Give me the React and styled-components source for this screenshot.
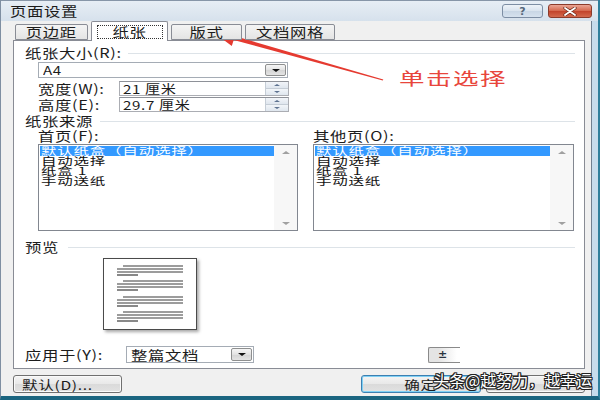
import React from 'react'
import styled, { createGlobalStyle, css } from 'styled-components'

const GlobalStyle = createGlobalStyle`
  html, body {
    margin: 0;
    padding: 0;
    background: #fff;
  }
  body {
    font-family: 'Noto Sans CJK SC', 'Noto Sans', sans-serif;
    color: #1c1c1c;
  }
`

const cjk = css`
  font-size: 13px;
  letter-spacing: 0.5px;
  line-height: 14px;
  white-space: nowrap;
`

// the dialog in the picture is stretched sideways, so the glyphs are too
const Wide = styled.span`
  display: inline-block;
  transform: scaleX(${p => p.$x || 1.26});
  transform-origin: ${p => (p.$center ? 'center' : 'left')} center;
`

const Window = styled.div`
  position: relative;
  width: 600px;
  height: 400px;
  box-sizing: border-box;
  display: flex;
  flex-direction: column;
  background: #c6dcec;
  border-left: 1px solid #7f8fa2;
  border-right: 2px solid #2f7f9c;
  border-bottom: 4px solid #1b6580;
  overflow: hidden;
`

const TitleBar = styled.div`
  height: 21px;
  flex: none;
  box-sizing: border-box;
  display: flex;
  align-items: center;
  justify-content: space-between;
  padding: 0 6px 0 9px;
  background: linear-gradient(#e7eef5, #d6e1ec);
  border-top: 1px solid #8796a8;
`

const Title = styled.div`
  ${cjk}
  color: #1a1a1a;
`

const Controls = styled.div`
  display: flex;
  gap: 5px;
  align-self: flex-start;
  margin-top: 3px;
`

const CaptionButton = styled.div`
  width: ${p => p.$w}px;
  height: 14px;
  box-sizing: border-box;
  border: 1px solid ${p => (p.$close ? '#8b3b2b' : '#7d8ea4')};
  border-radius: 3px;
  background: ${p =>
    p.$close
      ? 'linear-gradient(#eaa595, #d4664c 50%, #c2432b 51%, #d36a4e)'
      : 'linear-gradient(#eef3f8, #d9e3ee 50%, #c8d6e5 51%, #d6e2ee)'};
  display: flex;
  align-items: center;
  justify-content: center;
  font: bold 11px 'DejaVu Sans', sans-serif;
  color: #56677a;
`

const Body = styled.div`
  flex: 1;
  display: flex;
  flex-direction: column;
  margin-right: 6px;
  padding: 0 6px 0 12px;
  background: #f0f0f0;
  border-right: 1px solid #6f7f90;
`

const TabRow = styled.div`
  height: 19px;
  flex: none;
  display: flex;
  align-items: flex-end;
  gap: 3px;
  padding-left: 2px;
  position: relative;
  z-index: 1;
`

const Tab = styled.div`
  ${cjk}
  width: ${p => p.$w}px;
  height: ${p => (p.$active ? 20 : 16)}px;
  margin-bottom: ${p => (p.$active ? -1 : 0)}px;
  box-sizing: border-box;
  border: 1px solid #898c95;
  border-bottom: ${p => (p.$active ? 'none' : '1px solid #898c95')};
  border-radius: 2px 2px 0 0;
  background: ${p => (p.$active ? '#fff' : 'linear-gradient(#f4f4f4, #e4e4e4)')};
  display: flex;
  align-items: center;
  justify-content: center;
`

const FocusRect = styled.span`
  border: 1px dotted #333;
  width: 64px;
  height: 12px;
  display: flex;
  align-items: center;
  justify-content: center;
`

const Panel = styled.div`
  height: 329px;
  flex: none;
  box-sizing: border-box;
  background: #fff;
  border: 1px solid #898c95;
  padding: 5px 9px 0 11px;
  display: flex;
  flex-direction: column;
`

const SectionHead = styled.div`
  ${cjk}
  height: 14px;
  display: flex;
  align-items: center;
  margin-top: ${p => p.$mt || 0}px;

  &::after {
    content: '';
    flex: 1;
    height: 1px;
    background: #dde3e8;
  }
`

const HeadLabel = styled.div`
  width: ${p => p.$w}px;
`

const Combo = styled.div`
  width: ${p => p.$w}px;
  height: ${p => p.$h}px;
  margin-top: ${p => p.$mt || 0}px;
  margin-left: ${p => p.$ml || 0}px;
  box-sizing: border-box;
  border: 1px solid #a5acb5;
  background: #fff;
  display: flex;
  align-items: center;
  padding: 0 1px 0 4px;
  ${cjk}
  font-size: ${p => p.$fs || 13}px;
`

const DropButton = styled.div`
  margin-left: auto;
  width: 21px;
  height: ${p => p.$h}px;
  box-sizing: border-box;
  border: 1px solid #8e8f8f;
  border-radius: 2px;
  background: linear-gradient(#f6f6f6, #e2e2e2 50%, #d4d4d4 51%, #e4e4e4);
  display: flex;
  align-items: center;
  justify-content: center;
`

const Caret = styled.span`
  width: 0;
  height: 0;
  border-left: ${p => p.$s || 4}px solid transparent;
  border-right: ${p => p.$s || 4}px solid transparent;
  ${p =>
    p.$up
      ? css`border-bottom: ${(p.$s || 4) - 1}px solid ${p.$c || '#111'};`
      : css`border-top: ${(p.$s || 4) - 1}px solid ${p.$c || '#111'};`}
`

const Indent = styled.div`
  margin-left: 13px;
`

const FieldRow = styled.div`
  display: flex;
  align-items: center;
  margin-top: ${p => p.$mt}px;
`

const FieldLabel = styled.div`
  ${cjk}
  width: ${p => p.$w}px;
`

const Input = styled.div`
  width: 170px;
  height: 15px;
  box-sizing: border-box;
  border: 1px solid #abadb3;
  border-top-color: #8e9198;
  display: flex;
  align-items: center;
  padding-left: 3px;
  ${cjk}
  font-size: 12px;
`

const Spinner = styled.div`
  margin-left: auto;
  width: 22px;
  height: 13px;
  display: flex;
  flex-direction: column;
  border-left: 1px solid #c5cdd6;
`

const SpinHalf = styled.div`
  flex: 1;
  display: flex;
  align-items: center;
  justify-content: center;
  background: linear-gradient(#f2f5f9, #dfe6ee);
  border-bottom: ${p => (p.$top ? '1px solid #c5cdd6' : 'none')};
`

const SourceGrid = styled.div`
  margin-left: 13px;
  margin-top: 1px;
  display: grid;
  grid-template-columns: 260px 261px;
  column-gap: 15px;
  row-gap: 1px;
`

const SubLabel = styled.div`
  ${cjk}
  height: 14px;
`

const ListBox = styled.div`
  height: 87px;
  box-sizing: border-box;
  border: 1px solid #828790;
  background: #fff;
  display: flex;
`

const Items = styled.div`
  flex: 1;
  padding: 1px 0 0 1px;
`

const Item = styled.div`
  font-size: 10px;
  letter-spacing: 0.5px;
  line-height: 10px;
  height: 10px;
  white-space: nowrap;
  padding-left: 1px;
  color: ${p => (p.$selected ? '#fff' : '#111')};
  background: ${p => (p.$selected ? '#3399ff' : 'transparent')};
`

const ScrollBar = styled.div`
  width: 23px;
  display: flex;
  flex-direction: column;
  justify-content: space-between;
  align-items: center;
  padding: 6px 0 5px;
  background: #f7f7f7;
`

const PreviewPage = styled.div`
  margin: 4px 0 0 78px;
  width: 94px;
  height: 72px;
  box-sizing: border-box;
  border: 1px solid #4a4a4a;
  background: #fff;
  box-shadow: 2px 2px 3px rgba(0, 0, 0, 0.35);
`

const ApplyRow = styled.div`
  display: flex;
  align-items: center;
  height: 17px;
  margin-top: 16px;
`

const GhostButton = styled.div`
  margin-left: 174px;
  width: 32px;
  height: 16px;
  box-sizing: border-box;
  border: 1px solid #8a8a8a;
  border-right: none;
  border-radius: 2px 0 0 2px;
  background: linear-gradient(90deg, #e4e4e4 30%, #fff 90%);
  font: bold 11px 'DejaVu Sans', sans-serif;
  color: #2a3440;
  display: flex;
  align-items: center;
  padding-left: 9px;
`

const ButtonRow = styled.div`
  display: flex;
  gap: 5px;
  height: 18px;
  margin-top: 6px;
`

const Button = styled.div`
  width: ${p => p.$w}px;
  height: 18px;
  box-sizing: border-box;
  border: 1px solid ${p => (p.$default ? '#3c7fb1' : '#707070')};
  border-radius: 3px;
  background: linear-gradient(#f4f4f4, #e8e8e8 50%, #dadada 51%, #e2e2e2);
  box-shadow: ${p => (p.$default ? 'inset 0 0 0 1px #7fd0f4' : 'inset 0 0 0 1px #fafafa')};
  display: flex;
  align-items: center;
  justify-content: ${p => p.$align || 'center'};
  padding-left: ${p => p.$pl || 0}px;
  font-size: 12px;
  letter-spacing: 0.5px;
  white-space: nowrap;
`

const Spacer = styled.div`
  flex: 1;
`

const Note = styled.div`
  position: absolute;
  left: 398px;
  top: 67px;
  font-size: 17px;
  letter-spacing: 1px;
  line-height: 22px;
  color: #e8463c;
  white-space: nowrap;
`

const Arrow = styled.svg`
  position: absolute;
  left: 0;
  top: 0;
  pointer-events: none;
`

const Watermark = styled.div`
  position: absolute;
  left: 432px;
  top: 370px;
  font-size: 16px;
  line-height: 20px;
  color: #fff;
  white-space: nowrap;
  text-shadow: 1px 0 0 #222, -1px 0 0 #222, 0 1px 0 #222, 0 -1px 0 #222, 1px 1px 0 #222,
    -1px -1px 0 #222, 1px -1px 0 #222, -1px 1px 0 #222;
`

const tabs = [
  { label: '页边距', w: 73 },
  { label: '纸张', w: 77, active: true },
  { label: '版式', w: 71 },
  { label: '文档网格', w: 90 },
]

const sources = ['默认纸盒（自动选择）', '自动选择', '纸盒 1', '手动送纸']

const groups = [7, 22, 38, 53]

function Spin() {
  return (
    <Spinner>
      <SpinHalf $top>
        <Caret $up $s={3} $c='#5d7290' />
      </SpinHalf>
      <SpinHalf>
        <Caret $s={3} $c='#5d7290' />
      </SpinHalf>
    </Spinner>
  )
}

function SourceList() {
  return (
    <ListBox>
      <Items>
        {sources.map((s, i) => (
          <Item key={s} $selected={i === 0}>
            <Wide $x={1.55}>{s}</Wide>
          </Item>
        ))}
      </Items>
      <ScrollBar>
        <Caret $up $s={4} $c='#a0a0a0' />
        <Caret $s={4} $c='#a0a0a0' />
      </ScrollBar>
    </ListBox>
  )
}

export default function App() {
  return (
    <>
      <GlobalStyle />
      <Window>
        <TitleBar>
          <Title>
            <Wide>页面设置</Wide>
          </Title>
          <Controls>
            <CaptionButton $w={41}>?</CaptionButton>
            <CaptionButton $w={44} $close>
              <svg width='16' height='9' viewBox='0 0 16 9'>
                <path d='M3 1 L13 8 M13 1 L3 8' stroke='#6b2a1c' strokeWidth='3.2' strokeLinecap='round' />
                <path d='M3 1 L13 8 M13 1 L3 8' stroke='#fff' strokeWidth='1.8' strokeLinecap='round' />
              </svg>
            </CaptionButton>
          </Controls>
        </TitleBar>

        <Body>
          <TabRow>
            {tabs.map(t => (
              <Tab key={t.label} $w={t.w} $active={t.active}>
                {t.active ? (
                  <FocusRect>
                    <Wide $center>{t.label}</Wide>
                  </FocusRect>
                ) : (
                  <Wide $center>{t.label}</Wide>
                )}
              </Tab>
            ))}
          </TabRow>

          <Panel>
            <SectionHead>
              <HeadLabel $w={103}>
                <Wide>纸张大小(R):</Wide>
              </HeadLabel>
            </SectionHead>
            <Combo $w={250} $h={16} $mt={2} $ml={13} $fs={12}>
              <Wide>A4</Wide>
              <DropButton $h={12}>
                <Caret $s={4} />
              </DropButton>
            </Combo>
            <Indent>
              <FieldRow $mt={3}>
                <FieldLabel $w={81}>
                  <Wide>宽度(W):</Wide>
                </FieldLabel>
                <Input>
                  <Wide>21 厘米</Wide>
                  <Spin />
                </Input>
              </FieldRow>
              <FieldRow $mt={1}>
                <FieldLabel $w={81}>
                  <Wide>高度(E):</Wide>
                </FieldLabel>
                <Input>
                  <Wide>29.7 厘米</Wide>
                  <Spin />
                </Input>
              </FieldRow>
            </Indent>

            <SectionHead $mt={2}>
              <HeadLabel $w={75}>
                <Wide>纸张来源</Wide>
              </HeadLabel>
            </SectionHead>
            <SourceGrid>
              <SubLabel>
                <Wide>首页(F):</Wide>
              </SubLabel>
              <SubLabel>
                <Wide>其他页(O):</Wide>
              </SubLabel>
              <SourceList />
              <SourceList />
            </SourceGrid>

            <SectionHead $mt={9}>
              <HeadLabel $w={43}>
                <Wide>预览</Wide>
              </HeadLabel>
            </SectionHead>
            <PreviewPage>
              <svg width='92' height='70' viewBox='0 0 92 70'>
                {groups.map(y => (
                  <g key={y} stroke='#3a3a3a' strokeWidth='1.2'>
                    <line x1='19' y1={y} x2='79' y2={y} />
                    <line x1='13' y1={y + 3} x2='79' y2={y + 3} />
                    <line x1='13' y1={y + 6} x2='79' y2={y + 6} />
                    <line x1='13' y1={y + 9} x2='34' y2={y + 9} />
                  </g>
                ))}
              </svg>
            </PreviewPage>

            <ApplyRow>
              <FieldLabel $w={101}>
                <Wide>应用于(Y):</Wide>
              </FieldLabel>
              <Combo $w={128} $h={17}>
                <Wide>整篇文档</Wide>
                <DropButton $h={13}>
                  <Caret $s={4} />
                </DropButton>
              </Combo>
              <GhostButton>±</GhostButton>
            </ApplyRow>
          </Panel>

          <ButtonRow>
            <Button $w={109} $align='flex-start' $pl={8}>
              <Wide $x={1.3}>默认(D)...</Wide>
            </Button>
            <Spacer />
            <Button $w={120} $default>
              <Wide $x={1.3} $center>确定</Wide>
            </Button>
            <Button $w={99} />
          </ButtonRow>
        </Body>

        <Arrow width='600' height='400' viewBox='0 0 600 400'>
          <polygon
            points='212,32 235.6,30 233.7,36.1 382.3,79.4 381.8,80.6 232.7,39.9 230.8,46'
            fill='#e53a30'
          />
        </Arrow>
        <Note>
          <Wide $x={1.5}>单击选择</Wide>
        </Note>
        <Watermark>头条@越努力，越幸运</Watermark>
      </Window>
    </>
  )
}
